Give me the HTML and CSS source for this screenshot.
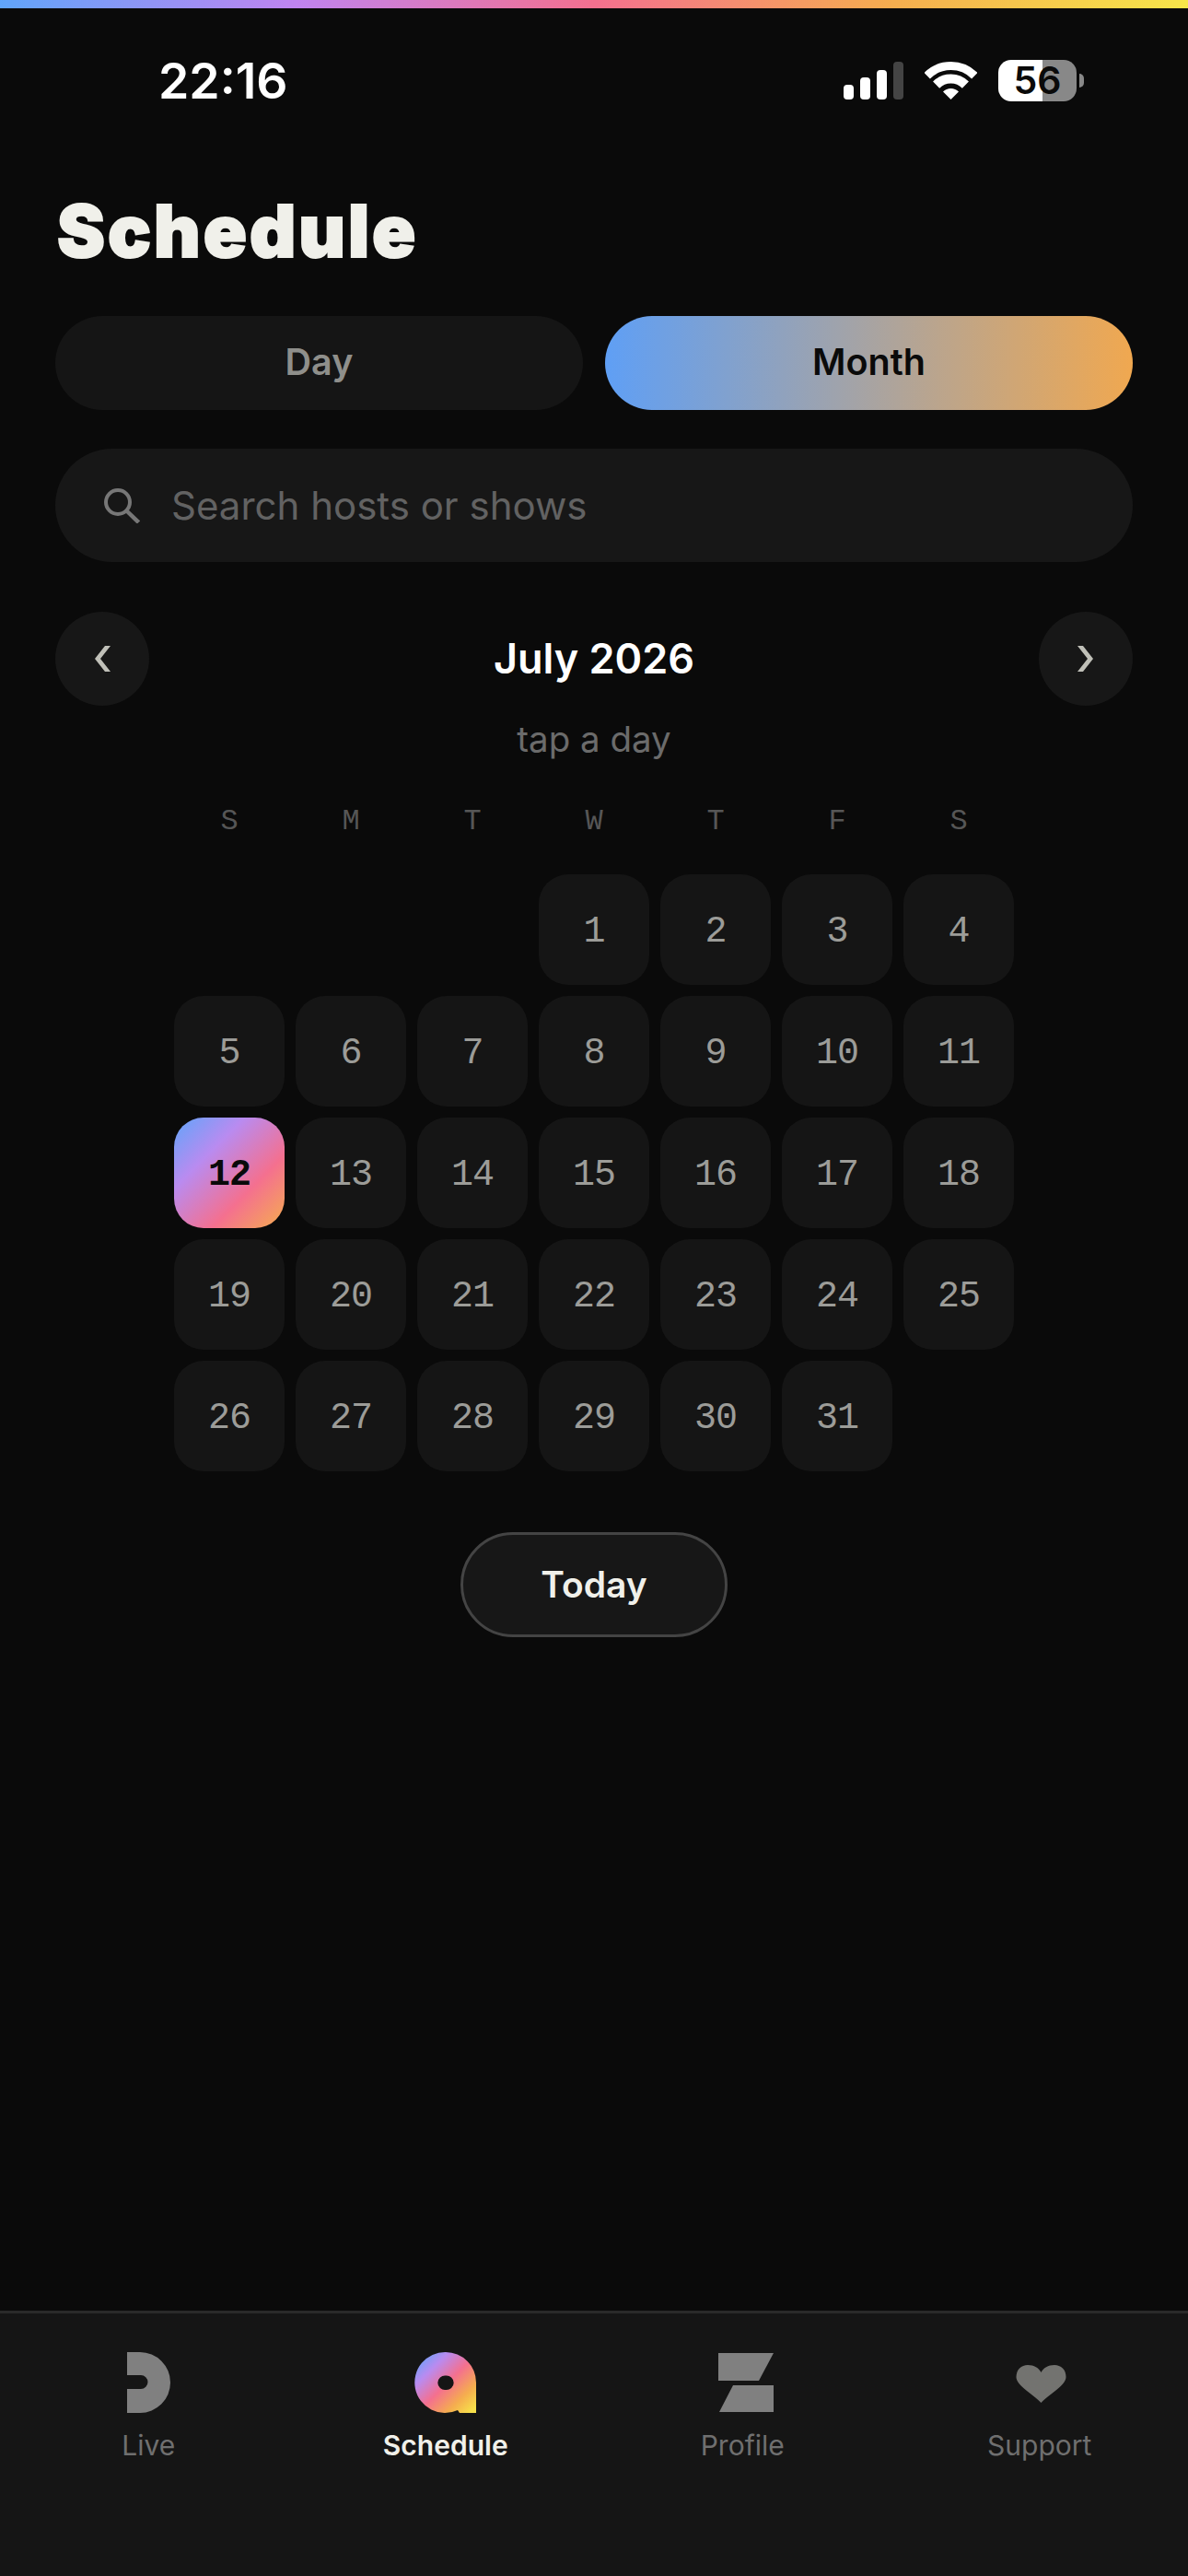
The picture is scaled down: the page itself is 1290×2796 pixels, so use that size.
FILE: index.html
```html
<!DOCTYPE html>
<html lang="en">
<head>
    <meta charset="UTF-8">
    <title>Schedule</title>
    <link rel="stylesheet" href="styles.css">
</head>
<body>
    <div id="app">
        <div class="rainbow"></div>

        <!-- Status Bar -->
        <div class="status">
            <span class="clock">22:16</span>
            <div class="status-icons">
                <div class="signal">
                    <i class="bar b1"></i><i class="bar b2"></i><i class="bar b3"></i><i class="bar b4"></i>
                </div>
                <svg class="wifi" viewBox="0 0 57 41">
                    <path d="M2.7 15.2A36.5 36.5 0 0 1 54.3 15.2" fill="none" stroke="#fff" stroke-width="9"/>
                    <path d="M12.6 25.1A22.5 22.5 0 0 1 44.4 25.1" fill="none" stroke="#fff" stroke-width="10"/>
                    <path d="M28.5 41L20 32.5A12 12 0 0 1 37 32.5Z" fill="#fff"/>
                </svg>
                <div class="battery">
                    <div class="battery-body">56</div>
                    <div class="battery-nub"></div>
                </div>
            </div>
        </div>

        <h1>Schedule</h1>

        <!-- Day / Month -->
        <div class="tabs">
            <button class="tab">Day</button>
            <button class="tab active">Month</button>
        </div>

        <!-- Search -->
        <div class="search">
            <svg class="search-icon" viewBox="0 0 39 38">
                <circle cx="15" cy="15" r="13" fill="none" stroke="#777777" stroke-width="4"/>
                <path d="M24 24L37.5 37" stroke="#777777" stroke-width="4.5"/>
            </svg>
            <span>Search hosts or shows</span>
        </div>

        <!-- Month Navigation -->
        <div class="month-nav">
            <button class="nav-btn">
                <svg viewBox="0 0 18 28"><path d="M12 0H18L7 14L18 28H12L1 14Z" fill="#c0c0b8"/></svg>
            </button>
            <h2>July 2026</h2>
            <button class="nav-btn">
                <svg viewBox="0 0 18 28"><path d="M6 0H0L11 14L0 28H6L17 14Z" fill="#c0c0b8"/></svg>
            </button>
        </div>
        <p class="hint">tap a day</p>

        <!-- Calendar -->
        <div class="weekdays">
            <span>S</span><span>M</span><span>T</span><span>W</span><span>T</span><span>F</span><span>S</span>
        </div>
        <div class="calendar">
            <div class="blank"></div><div class="blank"></div><div class="blank"></div>
            <div class="day">1</div><div class="day">2</div><div class="day">3</div><div class="day">4</div>
            <div class="day">5</div><div class="day">6</div><div class="day">7</div><div class="day">8</div><div class="day">9</div><div class="day">10</div><div class="day">11</div>
            <div class="day selected">12</div><div class="day">13</div><div class="day">14</div><div class="day">15</div><div class="day">16</div><div class="day">17</div><div class="day">18</div>
            <div class="day">19</div><div class="day">20</div><div class="day">21</div><div class="day">22</div><div class="day">23</div><div class="day">24</div><div class="day">25</div>
            <div class="day">26</div><div class="day">27</div><div class="day">28</div><div class="day">29</div><div class="day">30</div><div class="day">31</div>
        </div>

        <button class="today">Today</button>

        <!-- Bottom Nav -->
        <nav class="tabbar">
            <div class="tabbar-item">
                <svg viewBox="0 0 66 66"><path d="M10 0H24A33 33 0 0 1 24 66H10V40H25A7.5 7.5 0 0 0 25 25H10Z" fill="#808080"/></svg>
                <span>Live</span>
            </div>
            <div class="tabbar-item current">
                <svg viewBox="0 0 66 66">
                    <defs>
                        <linearGradient id="rainbow-icon" x1="0" y1="0" x2="1" y2="1">
                            <stop offset="0.05" stop-color="#60a5fa"/>
                            <stop offset="0.28" stop-color="#b98bf0"/>
                            <stop offset="0.52" stop-color="#f4708f"/>
                            <stop offset="0.76" stop-color="#f5ad4f"/>
                            <stop offset="0.95" stop-color="#f7e04a"/>
                        </linearGradient>
                    </defs>
                    <path fill-rule="evenodd" fill="url(#rainbow-icon)" d="M33 0A33 33 0 0 1 66 33V66H48L46 63A33 33 0 1 1 33 0ZM33 25.5A7.8 7.8 0 1 0 33 41A7.8 7.8 0 1 0 33 25.5Z"/>
                </svg>
                <span>Schedule</span>
            </div>
            <div class="tabbar-item">
                <svg viewBox="0 0 66 66"><path d="M7 1H67L51 31H7ZM23 36H67V65H8Z" fill="#808080"/></svg>
                <span>Profile</span>
            </div>
            <div class="tabbar-item">
                <svg viewBox="0 0 66 66"><path d="M34.5 55C26 46 7.5 36 7.5 27C7.5 19 13 14 20 14C27 14 32 17 34.5 22C37 17 42 14 49 14C56 14 61.5 19 61.5 27C61.5 36 43 46 34.5 55Z" fill="#737370"/></svg>
                <span>Support</span>
            </div>
        </nav>
    </div>
</body>
</html>
```

FILE: styles.css
```css
/* General Page Styling */
* {
    box-sizing: border-box;
}

body {
    margin: 0;
    background-color: #0a0a0a;
    font-family: Inter, "Noto Sans", sans-serif;
}

button {
    border: none;
    font-family: inherit;
    padding: 0;
}

#app {
    width: 1290px;
    height: 2796px;
    display: flex;
    flex-direction: column;
    align-items: center;
    overflow: hidden;
}

.rainbow {
    width: 100%;
    height: 9px;
    flex-shrink: 0;
    background: linear-gradient(90deg, #60a5fa, #c084f0 25%, #f4708f 50%, #f5ad4f 75%, #f7e64a);
}

/* Status Bar */
.status {
    width: 100%;
    height: 156px;
    padding: 0 113px 0 172px;
    display: flex;
    align-items: center;
    justify-content: space-between;
}

.clock {
    color: #ffffff;
    font-size: 53.5px;
    font-weight: 600;
}

.status-icons {
    display: flex;
    align-items: center;
    gap: 23px;
}

.signal {
    display: flex;
    align-items: flex-end;
    gap: 7px;
    height: 41px;
}

.bar {
    width: 11px;
    background-color: #ffffff;
    border-radius: 4px;
}

.b1 { height: 16px; }
.b2 { height: 24px; }
.b3 { height: 32px; }
.b4 { height: 41px; background-color: #444444; }

.wifi {
    width: 57px;
    height: 41px;
}

.battery {
    display: flex;
    align-items: center;
    gap: 3px;
}

.battery-body {
    width: 85px;
    height: 45px;
    border-radius: 14px;
    background: linear-gradient(90deg, #ffffff 56.5%, #888888 56.5%);
    color: #0a0a0a;
    font-size: 41px;
    font-weight: 600;
    line-height: 45px;
    text-align: center;
}

.battery-nub {
    width: 5px;
    height: 15px;
    border-radius: 0 8px 8px 0;
    background-color: #888888;
}

h1 {
    align-self: flex-start;
    margin: 36px 0 42px 62px;
    color: #f0f0ea;
    font-size: 78px;
    font-weight: 900;
    letter-spacing: 3px;
    line-height: 100px;
    -webkit-text-stroke: 2px #f0f0ea;
}

/* Day / Month */
.tabs {
    width: 1170px;
    display: flex;
    gap: 24px;
}

.tab {
    flex: 1;
    height: 102px;
    padding-bottom: 2px;
    border-radius: 51px;
    background-color: #151515;
    color: #8f8f8b;
    font-size: 39.5px;
    font-weight: 600;
}

.tab.active {
    background: linear-gradient(90deg, #5f9ff5, #f0a850);
    color: #0a0a0a;
}

/* Search */
.search {
    width: 1170px;
    height: 123px;
    margin-top: 42px;
    padding-left: 53px;
    display: flex;
    align-items: center;
    gap: 34px;
    border-radius: 62px;
    background-color: #171717;
    color: #626262;
    font-size: 42px;
}

.search-icon {
    width: 39px;
    height: 38px;
}

/* Month Navigation */
.month-nav {
    width: 1170px;
    margin-top: 54px;
    display: flex;
    align-items: center;
    justify-content: space-between;
}

.nav-btn {
    width: 102px;
    height: 102px;
    border-radius: 50%;
    background-color: #171717;
    display: flex;
    align-items: center;
    justify-content: center;
}

.nav-btn svg {
    width: 18px;
    height: 28px;
}

h2 {
    margin: 0;
    padding-bottom: 2px;
    color: #ffffff;
    font-size: 45px;
    font-weight: 600;
}

.hint {
    margin: 11px 0 0;
    color: #6b6b6b;
    font-size: 38.5px;
    line-height: 50px;
}

/* Calendar */
.weekdays,
.calendar {
    width: 912px;
    display: grid;
    grid-template-columns: repeat(7, 120px);
    column-gap: 12px;
}

.weekdays {
    margin-top: 45px;
    color: #565656;
    font-family: "Liberation Mono", monospace;
    font-size: 32px;
    line-height: 40px;
    text-align: center;
}

.calendar {
    margin-top: 37px;
    grid-auto-rows: 120px;
    row-gap: 12px;
}

.day {
    padding-top: 5px;
    display: flex;
    align-items: center;
    justify-content: center;
    border-radius: 32px;
    background-color: #151515;
    color: #9c9c98;
    font-family: "Liberation Mono", monospace;
    font-size: 40px;
    letter-spacing: -1px;
}

.day.selected {
    background: linear-gradient(135deg, #60a5fa 0%, #b98bf0 32%, #f4708f 67%, #f5ad4f 100%);
    color: #0a0a0a;
    font-weight: 700;
}

.today {
    width: 290px;
    height: 114px;
    margin-top: 66px;
    padding-bottom: 2px;
    border: 3px solid #444444;
    border-radius: 57px;
    background-color: #171717;
    color: #f0f0ea;
    font-size: 39px;
    font-weight: 600;
}

/* Bottom Nav */
.tabbar {
    width: 100%;
    height: 288px;
    margin-top: auto;
    padding-top: 42px;
    display: grid;
    grid-template-columns: repeat(4, 1fr);
    border-top: 3px solid #2a2a2a;
    background-color: #151515;
}

.tabbar-item {
    display: flex;
    flex-direction: column;
    align-items: center;
    color: #6f6f6f;
    font-size: 30px;
    line-height: 40px;
}

.tabbar-item svg {
    width: 66px;
    height: 66px;
    margin-bottom: 15px;
    overflow: visible;
}

.tabbar-item.current {
    color: #f0f0ea;
    font-weight: 600;
}
```
